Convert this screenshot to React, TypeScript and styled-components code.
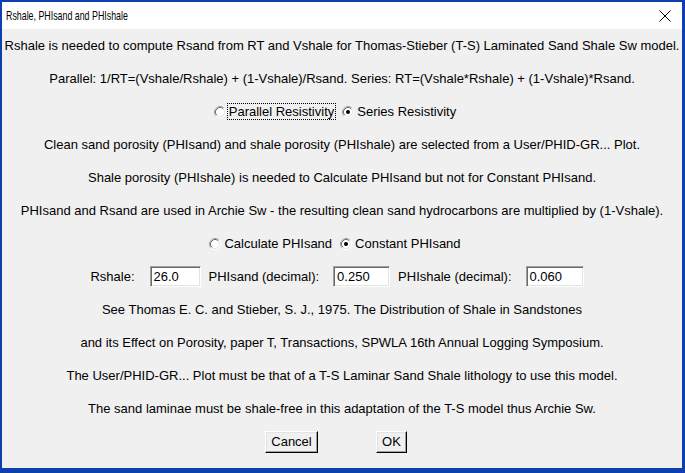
import styled, { createGlobalStyle } from "styled-components"

const GlobalStyle = createGlobalStyle`
  html, body { margin: 0; padding: 0; }
  body { font-family: "Liberation Sans", Arial, sans-serif; }
`

const Window = styled.div`
  width: 685px;
  height: 473px;
  box-sizing: border-box;
  background: #0d3fae;
  padding: 2px 3px 5px 2px;
  display: flex;
  flex-direction: column;
`

const TitleBar = styled.div`
  height: 27px;
  background: #fff;
  display: flex;
  align-items: center;
  justify-content: space-between;
  padding: 0 11px 0 4px;
`

const Title = styled.span`
  font-size: 13px;
  color: #000;
  display: inline-block;
  transform: scaleX(0.68);
  transform-origin: left center;
  white-space: nowrap;
`

const Content = styled.div`
  flex: 1;
  background: #f0f0f0;
  display: flex;
  flex-direction: column;
  align-items: center;
`

const Row = styled.div<{ $shift?: number }>`
  height: 33px;
  width: 100%;
  display: flex;
  align-items: center;
  justify-content: center;
  box-sizing: border-box;
  padding-right: ${p => p.$shift ?? 0}px;
  font-size: 13px;
  color: #000;
  white-space: nowrap;
`

const Option = styled.label`
  display: flex;
  align-items: center;
  margin-right: 6px;
  &:last-child { margin-right: 0; }
`

const OptionText = styled.span<{ $focused?: boolean }>`
  margin-left: 1px;
  padding: 0 1px;
  line-height: 15px;
  border: 1px dotted ${p => (p.$focused ? "#000" : "transparent")};
`

const FieldLabel = styled.span<{ $gap: number }>`
  margin-right: ${p => p.$gap}px;
`

const Field = styled.div<{ $w: number }>`
  width: ${p => p.$w}px;
  height: 21px;
  box-sizing: border-box;
  background: #fff;
  border: 1px solid;
  border-color: #a0a0a0 #fff #fff #a0a0a0;
  box-shadow: inset 1px 1px 0 #696969, inset -1px -1px 0 #e3e3e3;
  padding: 2px 0 0 3px;
  margin-right: 8px;
  color: #000;
  &:last-child { margin-right: 0; }
`

const Button = styled.div<{ $w: number }>`
  width: ${p => p.$w}px;
  height: 22px;
  box-sizing: border-box;
  background: #f0f0f0;
  border: 1px solid;
  border-color: #fff #000 #000 #fff;
  box-shadow: inset -1px -1px 0 #a0a0a0, inset 1px 1px 0 #e3e3e3;
  display: flex;
  align-items: center;
  justify-content: center;
  font-size: 13px;
  color: #000;
`

const Buttons = styled(Row)`
  gap: 58px;
`

function Radio({ checked }: { checked?: boolean }) {
  return (
    <svg width="12" height="12" viewBox="0 0 12 12">
      <circle cx="6" cy="6" r="5" fill="#fff" />
      <path d="M2.11 9.89 A5.5 5.5 0 0 1 9.89 2.11" stroke="#a0a0a0" fill="none" />
      <path d="M9.89 2.11 A5.5 5.5 0 0 1 2.11 9.89" stroke="#fff" fill="none" />
      <path d="M2.82 9.18 A4.5 4.5 0 0 1 9.18 2.82" stroke="#696969" fill="none" />
      <path d="M9.18 2.82 A4.5 4.5 0 0 1 2.82 9.18" stroke="#e3e3e3" fill="none" />
      {checked && <circle cx="6" cy="6" r="2" fill="#000" />}
    </svg>
  )
}

function CloseIcon() {
  return (
    <svg width="12" height="12" viewBox="0 0 12 12">
      <path d="M0.5 0.5 L11.5 11.5 M11.5 0.5 L0.5 11.5" stroke="#000" strokeWidth="1" />
    </svg>
  )
}

export default function App() {
  return (
    <>
      <GlobalStyle />
      <Window>
        <TitleBar>
          <Title>Rshale, PHIsand and PHIshale</Title>
          <CloseIcon />
        </TitleBar>
        <Content>
          <Row>Rshale is needed to compute Rsand from RT and Vshale for Thomas-Stieber (T-S) Laminated Sand Shale Sw model.</Row>
          <Row>Parallel: 1/RT=(Vshale/Rshale) + (1-Vshale)/Rsand. Series: RT=(Vshale*Rshale) + (1-Vshale)*Rsand.</Row>
          <Row $shift={12}>
            <Option>
              <Radio />
              <OptionText $focused>Parallel Resistivity</OptionText>
            </Option>
            <Option>
              <Radio checked />
              <OptionText>Series Resistivity</OptionText>
            </Option>
          </Row>
          <Row>Clean sand porosity (PHIsand) and shale porosity (PHIshale) are selected from a User/PHID-GR... Plot.</Row>
          <Row>Shale porosity (PHIshale) is needed to Calculate PHIsand but not for Constant PHIsand.</Row>
          <Row>PHIsand and Rsand are used in Archie Sw - the resulting clean sand hydrocarbons are multiplied by (1-Vshale).</Row>
          <Row $shift={12}>
            <Option>
              <Radio />
              <OptionText>Calculate PHIsand</OptionText>
            </Option>
            <Option>
              <Radio checked />
              <OptionText>Constant PHIsand</OptionText>
            </Option>
          </Row>
          <Row $shift={10}>
            <FieldLabel $gap={15}>Rshale:</FieldLabel>
            <Field $w={51}>26.0</Field>
            <FieldLabel $gap={14}>PHIsand (decimal):</FieldLabel>
            <Field $w={57}>0.250</Field>
            <FieldLabel $gap={14}>PHIshale (decimal):</FieldLabel>
            <Field $w={58}>0.060</Field>
          </Row>
          <Row>See Thomas E. C. and Stieber, S. J., 1975. The Distribution of Shale in Sandstones</Row>
          <Row>and its Effect on Porosity, paper T, Transactions, SPWLA 16th Annual Logging Symposium.</Row>
          <Row>The User/PHID-GR... Plot must be that of a T-S Laminar Sand Shale lithology to use this model.</Row>
          <Row>The sand laminae must be shale-free in this adaptation of the T-S model thus Archie Sw.</Row>
          <Buttons $shift={12}>
            <Button $w={53}>Cancel</Button>
            <Button $w={31}>OK</Button>
          </Buttons>
        </Content>
      </Window>
    </>
  )
}
